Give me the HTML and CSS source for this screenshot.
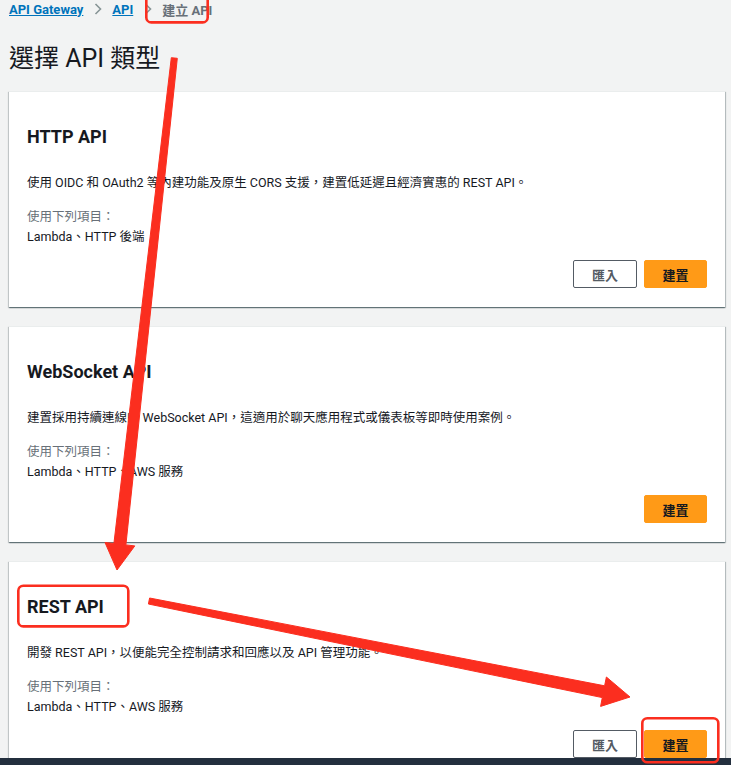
FILE: index.html
```html
<!DOCTYPE html>
<html>
<head>
  <title>建立 API - API Gateway</title>
  <link rel="stylesheet" href="styles.css">
</head>
<body>

  <div class="page">
    <nav class="breadcrumb">
      <a href="#">API Gateway</a>
      <svg class="chev" width="8" height="12" viewBox="0 0 8 12"><path d="M1.5 1l5 5-5 5" fill="none" stroke="#879596" stroke-width="1.6"/></svg>
      <a href="#">API</a>
      <svg class="chev" width="8" height="12" viewBox="0 0 8 12"><path d="M1.5 1l5 5-5 5" fill="none" stroke="#879596" stroke-width="1.6"/></svg>
      <span class="current">建立 API</span>
    </nav>

    <h1 class="page-title">選擇 API 類型</h1>

    <div class="card">
      <h2>HTTP API</h2>
      <p class="desc">使用 OIDC 和 OAuth2 等內建功能及原生 CORS 支援，建置低延遲且經濟實惠的 REST API。</p>
      <div class="works-with">使用下列項目：</div>
      <div class="integrations">Lambda、HTTP 後端</div>
      <div class="actions">
        <button class="btn">匯入</button>
        <button class="btn primary">建置</button>
      </div>
    </div>

    <div class="card">
      <h2>WebSocket API</h2>
      <p class="desc">建置採用持續連線的 WebSocket API，這適用於聊天應用程式或儀表板等即時使用案例。</p>
      <div class="works-with">使用下列項目：</div>
      <div class="integrations">Lambda、HTTP、AWS 服務</div>
      <div class="actions">
        <button class="btn primary">建置</button>
      </div>
    </div>

    <div class="card">
      <h2>REST API</h2>
      <p class="desc">開發 REST API，以便能完全控制請求和回應以及 API 管理功能。</p>
      <div class="works-with">使用下列項目：</div>
      <div class="integrations">Lambda、HTTP、AWS 服務</div>
      <div class="actions">
        <button class="btn">匯入</button>
        <button class="btn primary">建置</button>
      </div>
    </div>
  </div>

  <div class="footer"></div>

  <!-- red markup drawn over the screenshot -->
  <svg class="markup" width="731" height="765" viewBox="0 0 731 765">
    <g fill="none" stroke="#fb2e1f" stroke-width="2.6">
      <rect x="146.3" y="-8" width="61.4" height="30.4" rx="5"/>
      <rect x="18.3" y="585.8" width="110" height="40.6" rx="5"/>
      <rect x="642.3" y="718.3" width="76" height="44" rx="5"/>
    </g>
    <g fill="#fb2e1f" stroke="#fb2e1f" stroke-width="1" stroke-linejoin="round">
      <polygon points="171.3,57.7 177.3,58.3 125.9,544.9 134.8,545.9 117,570 105,542.5 113.9,543.5"/>
      <polygon points="149.6,598 148.4,604 602.3,697.6 600.6,706.4 630,697 606.4,677 604.6,685.8"/>
    </g>
  </svg>

</body>
</html>
```

FILE: styles.css
```css
body {
  margin: 0;
  background-color: #f2f3f3;
  font-family: Roboto, "Noto Sans CJK TC", sans-serif;
  color: #16191f;
  overflow: hidden;
}
.page {
  padding: 0 6px 0 9px;
}
.breadcrumb {
  display: flex;
  align-items: center;
  height: 18px;
  font-size: 13px;
  font-weight: 700;
}
.breadcrumb a {
  color: #0073bb;
  text-decoration: underline;
}
.breadcrumb .chev {
  margin: 0 10px 0 11px;
}
.breadcrumb .current {
  color: #687078;
}
.page-title {
  margin: 26px 0 17px;
  font-size: 25px;
  line-height: 30px;
  font-weight: 400;
}
.card {
  height: 216px;
  box-sizing: border-box;
  margin-bottom: 19px;
  padding: 35px 18px 19px;
  background-color: #fff;
  border-top: 1px solid #eaeded;
  box-shadow: 0 1px 1px 0 rgba(0, 28, 36, 0.4), 1px 1px 1px 0 rgba(0, 28, 36, 0.2), -1px 1px 1px 0 rgba(0, 28, 36, 0.15);
}
.card h2 {
  margin: -1px 0 0;
  font-size: 18px;
  line-height: 22px;
  font-weight: 700;
}
.desc {
  margin: 25px 0 14px;
  font-size: 12.5px;
  line-height: 20px;
}
.works-with {
  font-size: 12.5px;
  line-height: 20px;
  color: #687078;
}
.integrations {
  font-size: 12.5px;
  line-height: 20px;
}
.actions {
  display: flex;
  justify-content: flex-end;
  gap: 7px;
  margin-top: 13px;
}
.btn {
  width: 64px;
  height: 28px;
  box-sizing: border-box;
  font-family: Roboto, "Noto Sans CJK TC", sans-serif;
  font-size: 13px;
  font-weight: 700;
  color: #545b64;
  background-color: #fff;
  border: 1px solid #545b64;
  border-radius: 2px;
  cursor: pointer;
}
.btn.primary {
  width: 63px;
  color: #16191f;
  background-color: #ff9a17;
  border-color: #ff9a17;
}
.footer {
  position: fixed;
  left: 0;
  right: 0;
  bottom: 0;
  height: 7px;
  background-color: #232f3e;
}
.markup {
  position: absolute;
  left: 0;
  top: 0;
  pointer-events: none;
}
```
